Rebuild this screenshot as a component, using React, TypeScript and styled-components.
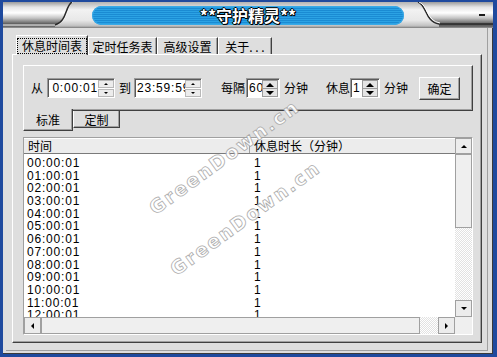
import React from 'react';
import styled, { createGlobalStyle } from 'styled-components';

const GlobalStyle = createGlobalStyle`
  html, body {
    margin: 0;
    padding: 0;
    background: #1f4a9e;
  }
  body {
    font-family: "Noto Sans CJK SC", "Liberation Sans", sans-serif;
    font-size: 12px;
    color: #000;
  }
`;

const Window = styled.div`
  position: relative;
  width: 497px;
  height: 357px;
  box-sizing: border-box;
  padding: 2px 4px 3px 3px;
  background: #1f4a9e;
  display: flex;
  flex-direction: column;
  overflow: hidden;
`;

const TitleBar = styled.div`
  position: relative;
  flex: none;
  height: 26px;
  display: grid;
  grid-template-columns: 1fr 312px 1fr;
  align-items: center;
`;

const TitleArt = styled.svg`
  position: absolute;
  left: 0;
  top: 0;
`;

const TitlePill = styled.div`
  position: relative;
  grid-column: 2;
  height: 19px;
  border-radius: 10px;
  background: repeating-linear-gradient(to bottom, #1a8bd3 0 1px, #2ba2e4 1px 2px);
  box-shadow: inset 0 0 0 1px #3aa9e6;
  color: #fff;
  font-size: 16px;
  font-weight: bold;
  line-height: 19px;
  text-align: center;
  text-shadow: 1px 0 #000, -1px 0 #000, 0 1px #000, 0 -1px #000, 1px 1px #000;
`;

const MinButton = styled.div`
  position: relative;
  grid-column: 3;
  justify-self: end;
  margin-right: 8px;
  width: 6px;
  height: 2px;
  background: #1c1c1c;
`;

const Client = styled.div`
  flex: 1;
  min-height: 0;
  display: flex;
  background: #dedede;
  border-right: 1px solid #3a3a3a;
  border-bottom: 1px solid #3a3a3a;
  padding: 0 4px 2px 3px;
`;

const Frame = styled.div`
  flex: 1;
  min-height: 0;
  display: flex;
  flex-direction: column;
  border-right: 1px solid #a0a0a0;
  border-bottom: 1px solid #a0a0a0;
  padding: 7px 5px 7px 6px;
`;

const TabStrip = styled.div`
  flex: none;
  display: flex;
  align-items: flex-end;
  height: 19px;
  padding-left: 4px;
`;

const Tab = styled.div<{ $active?: boolean; $w: number }>`
  position: relative;
  z-index: ${p => (p.$active ? 1 : 0)};
  box-sizing: border-box;
  width: ${p => p.$w}px;
  height: ${p => (p.$active ? 20 : 17)}px;
  margin-bottom: ${p => (p.$active ? -1 : 0)}px;
  display: flex;
  align-items: center;
  justify-content: center;
  background: #dedede;
  border-top: 1px solid #fff;
  border-left: 1px solid #fff;
  border-right: 1px solid #404040;
  box-shadow: inset -1px 0 #a0a0a0;
  white-space: nowrap;
`;

const FocusText = styled.span`
  border: 1px dotted #000;
  padding: 0 4px;
  line-height: 14px;
`;

const Page = styled.div`
  flex: 1;
  min-height: 0;
  display: flex;
  flex-direction: column;
  box-sizing: border-box;
  border-top: 1px solid #fff;
  border-left: 1px solid #fff;
  border-right: 1px solid #404040;
  border-bottom: 1px solid #404040;
  box-shadow: inset -1px -1px #a0a0a0;
  padding: 10px 8px 7px 10px;
`;

const Panel = styled.div`
  flex: none;
  height: 46px;
  box-sizing: border-box;
  display: flex;
  align-items: center;
  border-top: 1px solid #fff;
  border-left: 1px solid #fff;
  border-right: 1px solid #404040;
  border-bottom: 1px solid #404040;
  box-shadow: inset -1px -1px #a0a0a0;
`;

const Label = styled.span<{ $ml: number }>`
  margin-left: ${p => p.$ml}px;
  white-space: nowrap;
  line-height: 16px;
`;

const SpinBox = styled.div<{ $w: number; $ml: number }>`
  box-sizing: border-box;
  width: ${p => p.$w}px;
  height: 20px;
  margin-left: ${p => p.$ml}px;
  display: flex;
  background: #fff;
  border: 1px solid;
  border-color: #9a9a9a #fff #fff #9a9a9a;
  box-shadow: inset 1px 1px #5a5a5a;
`;

const SpinText = styled.div<{ $right?: boolean }>`
  flex: 1;
  overflow: hidden;
  display: flex;
  align-items: center;
  justify-content: ${p => (p.$right ? 'flex-end' : 'flex-start')};
  padding: 0 0 0 2px;
  font-family: "Liberation Sans", sans-serif;
  font-size: 12px;
  letter-spacing: 0.8px;
  white-space: nowrap;
`;

const SmallSpin = styled.div`
  flex: none;
  width: 16px;
  display: flex;
  flex-direction: column;
  gap: 1px;
  padding-top: 1px;
`;

const SpinHalf = styled.div`
  flex: 1;
  display: flex;
  align-items: center;
  justify-content: center;
  background: #ececec;
  border: 1px solid #b8b8b8;
`;

const BigSpin = styled.div`
  flex: none;
  width: 14px;
  margin: 1px 1px 0 0;
  display: flex;
  flex-direction: column;
  background: #e4e4e4;
  border: 1px solid #9a9a9a;
`;

const BigHalf = styled.div<{ $top?: boolean }>`
  flex: 1;
  display: flex;
  align-items: center;
  justify-content: center;
  border-bottom: ${p => (p.$top ? '1px solid #9a9a9a' : 'none')};
`;

const Tri = styled.span<{ $dir: 'up' | 'down' | 'left' | 'right'; $s: number }>`
  width: 0;
  height: 0;
  border-style: solid;
  border-color: transparent;
  ${p =>
    p.$dir === 'up'
      ? `border-width: 0 ${p.$s}px ${p.$s}px ${p.$s}px; border-bottom-color: #000;`
      : p.$dir === 'down'
      ? `border-width: ${p.$s}px ${p.$s}px 0 ${p.$s}px; border-top-color: #000;`
      : p.$dir === 'left'
      ? `border-width: ${p.$s}px ${p.$s}px ${p.$s}px 0; border-right-color: #000;`
      : `border-width: ${p.$s}px 0 ${p.$s}px ${p.$s}px; border-left-color: #000;`}
`;

const Button = styled.div`
  box-sizing: border-box;
  width: 41px;
  height: 23px;
  margin-left: 11px;
  display: flex;
  align-items: center;
  justify-content: center;
  background: #e2e2e2;
  border-top: 1px solid #fff;
  border-left: 1px solid #fff;
  border-right: 1px solid #404040;
  border-bottom: 1px solid #404040;
  box-shadow: inset -1px -1px #a0a0a0;
`;

const SubTabs = styled.div`
  flex: none;
  height: 20px;
  display: flex;
  align-items: flex-start;
  margin-bottom: 6px;
`;

const SubTab = styled.div<{ $active?: boolean; $w: number }>`
  position: relative;
  z-index: ${p => (p.$active ? 1 : 0)};
  box-sizing: border-box;
  width: ${p => p.$w}px;
  height: ${p => (p.$active ? 22 : 17)}px;
  margin-top: ${p => (p.$active ? -2 : 0)}px;
  display: flex;
  align-items: center;
  justify-content: center;
  background: #dedede;
  border-left: 1px solid #fff;
  border-right: 1px solid #404040;
  border-bottom: 1px solid #404040;
  box-shadow: inset -1px -1px #a0a0a0;
`;

const ListBox = styled.div`
  flex: 1;
  min-height: 0;
  display: grid;
  grid-template-columns: minmax(0, 1fr) 17px;
  grid-template-rows: minmax(0, 1fr) 17px;
  background: #fff;
  border: 1px solid;
  border-color: #a0a0a0 #fff #fff #a0a0a0;
  overflow: hidden;
`;

const ListContent = styled.div`
  min-height: 0;
  overflow: hidden;
  display: flex;
  flex-direction: column;
`;

const Header = styled.div`
  flex: none;
  display: flex;
  height: 16px;
  box-sizing: border-box;
  background: #ececec;
  border-top: 1px solid #fff;
  border-bottom: 1px solid #7a7a7a;
  margin-bottom: 3px;
`;

const HeaderCell = styled.div<{ $w?: number }>`
  box-sizing: border-box;
  ${p => (p.$w ? `width: ${p.$w}px;` : 'flex: 1;')}
  padding-left: 4px;
  line-height: 14px;
  border-right: ${p => (p.$w ? '1px solid #a0a0a0' : 'none')};
  white-space: nowrap;
`;

const Row = styled.div`
  display: flex;
  flex: none;
  height: 12.7px;
  font-family: "Liberation Sans", sans-serif;
  font-size: 12px;
  line-height: 12.7px;
  letter-spacing: 0.8px;
`;

const Cell = styled.div<{ $w?: number; $pl: number }>`
  ${p => (p.$w ? `width: ${p.$w}px;` : 'flex: 1;')}
  padding-left: ${p => p.$pl}px;
  box-sizing: border-box;
`;

const VScroll = styled.div`
  min-height: 0;
  display: flex;
  flex-direction: column;
`;

const HScroll = styled.div`
  display: flex;
`;

const ScrollBtn = styled.div<{ $w?: number; $h?: number }>`
  flex: none;
  box-sizing: border-box;
  width: ${p => (p.$w ? `${p.$w}px` : 'auto')};
  height: ${p => (p.$h ? `${p.$h}px` : 'auto')};
  display: flex;
  align-items: center;
  justify-content: center;
  background: #ececec;
  border: 1px solid #a0a0a0;
`;

const Thumb = styled.div<{ $w?: number; $h?: number }>`
  flex: none;
  box-sizing: border-box;
  width: ${p => (p.$w ? `${p.$w}px` : 'auto')};
  height: ${p => (p.$h ? `${p.$h}px` : 'auto')};
  background: #efefef;
  border: 1px solid #a0a0a0;
`;

const Track = styled.div`
  flex: 1;
  background: repeating-conic-gradient(#fff 0 25%, #e2e2e2 0 50%) 0 0 / 2px 2px;
`;

const Corner = styled.div`
  background: #efefef;
`;

const Watermark = styled.div<{ $x: number; $y: number }>`
  position: absolute;
  left: ${p => p.$x}px;
  top: ${p => p.$y}px;
  transform: translate(-50%, -50%) rotate(-36deg);
  font-family: "DejaVu Sans", sans-serif;
  font-weight: bold;
  font-size: 19px;
  letter-spacing: 2px;
  color: #fff;
  -webkit-text-stroke: 0.8px #a4a4a4;
  opacity: 0.9;
  white-space: nowrap;
  pointer-events: none;
`;

const rows = Array.from({ length: 13 }, (_, i) => `${String(i).padStart(2, '0')}:00:01`);

const TimeSpin: React.FC<{ value: string; w: number; ml: number; right?: boolean }> = ({ value, w, ml, right }) => (
  <SpinBox $w={w} $ml={ml}>
    <SpinText $right={right}>{value}</SpinText>
    <SmallSpin>
      <SpinHalf>
        <Tri $dir="up" $s={2} />
      </SpinHalf>
      <SpinHalf>
        <Tri $dir="down" $s={2} />
      </SpinHalf>
    </SmallSpin>
  </SpinBox>
);

const NumSpin: React.FC<{ value: string; w: number; ml: number }> = ({ value, w, ml }) => (
  <SpinBox $w={w} $ml={ml}>
    <SpinText>{value}</SpinText>
    <BigSpin>
      <BigHalf $top>
        <Tri $dir="up" $s={4} />
      </BigHalf>
      <BigHalf>
        <Tri $dir="down" $s={4} />
      </BigHalf>
    </BigSpin>
  </SpinBox>
);

const App: React.FC = () => {
  return (
    <>
      <GlobalStyle />
      <Window>
        <TitleBar>
          <TitleArt width="490" height="26" viewBox="0 0 490 26">
            <defs>
              <linearGradient id="side" x1="0" y1="0" x2="0" y2="1">
                <stop offset="0" stopColor="#9c9c9c" />
                <stop offset="0.2" stopColor="#e6e6e6" />
                <stop offset="0.42" stopColor="#ffffff" />
                <stop offset="0.62" stopColor="#c4c4c4" />
                <stop offset="0.86" stopColor="#555555" />
                <stop offset="1" stopColor="#7a7a7a" />
              </linearGradient>
              <linearGradient id="mid" x1="0" y1="0" x2="0" y2="1">
                <stop offset="0" stopColor="#b4b4b4" />
                <stop offset="0.3" stopColor="#f2f2f2" />
                <stop offset="0.7" stopColor="#e8e8e8" />
                <stop offset="0.9" stopColor="#c4c4c4" />
                <stop offset="1" stopColor="#8c8c8c" />
              </linearGradient>
            </defs>
            <rect x="0" y="0" width="490" height="26" fill="url(#side)" />
            <path d="M69 0 L415 0 C424 3 422 20 436 22 L436 26 L52 26 L52 23 C64 20 62 4 69 0 Z" fill="url(#mid)" />
            <path d="M70 0 C63 4 65 20 53 23 L0 23" fill="none" stroke="#ffffff" strokeWidth="1" />
            <path d="M69 0 C62 4 64 20 52 23" fill="none" stroke="#2a2a2a" strokeWidth="1.5" />
            <path d="M415 0 C424 3 422 20 436 22 L490 22" fill="none" stroke="#2a2a2a" strokeWidth="1.5" />
            <path d="M416 0 C425 3 423 19 437 21" fill="none" stroke="#ffffff" strokeWidth="1" />
            <rect x="0" y="25" width="490" height="1" fill="#8a8a8a" />
          </TitleArt>
          <TitlePill>**守护精灵**</TitlePill>
          <MinButton />
        </TitleBar>
        <Client>
          <Frame>
            <TabStrip>
              <Tab $active $w={72}>
                <FocusText>休息时间表</FocusText>
              </Tab>
              <Tab $w={69}>定时任务表</Tab>
              <Tab $w={61}>高级设置</Tab>
              <Tab $w={54}>关于. . .</Tab>
            </TabStrip>
            <Page>
              <Panel>
                <Label $ml={7}>从</Label>
                <TimeSpin value="0:00:01" w={68} ml={4} right />
                <Label $ml={4}>到</Label>
                <TimeSpin value="23:59:59" w={68} ml={3} />
                <Label $ml={19}>每隔</Label>
                <NumSpin value="60" w={34} ml={1} />
                <Label $ml={4}>分钟</Label>
                <Label $ml={18}>休息</Label>
                <NumSpin value="1" w={30} ml={0} />
                <Label $ml={4}>分钟</Label>
                <Button>确定</Button>
              </Panel>
              <SubTabs>
                <SubTab $active $w={50}>标准</SubTab>
                <SubTab $w={47}>定制</SubTab>
              </SubTabs>
              <ListBox>
                <ListContent>
                  <Header>
                    <HeaderCell $w={226}>时间</HeaderCell>
                    <HeaderCell>休息时长（分钟）</HeaderCell>
                  </Header>
                  {rows.map(r => (
                    <Row key={r}>
                      <Cell $w={226} $pl={3}>{r}</Cell>
                      <Cell $pl={4}>1</Cell>
                    </Row>
                  ))}
                </ListContent>
                <VScroll>
                  <ScrollBtn $h={16}>
                    <Tri $dir="up" $s={3} />
                  </ScrollBtn>
                  <Thumb $h={74} />
                  <Track />
                  <ScrollBtn $h={17}>
                    <Tri $dir="down" $s={3} />
                  </ScrollBtn>
                </VScroll>
                <HScroll>
                  <ScrollBtn $w={17}>
                    <Tri $dir="left" $s={3} />
                  </ScrollBtn>
                  <Thumb $w={379} />
                  <Track />
                  <ScrollBtn $w={17}>
                    <Tri $dir="right" $s={3} />
                  </ScrollBtn>
                </HScroll>
                <Corner />
              </ListBox>
            </Page>
          </Frame>
        </Client>
        <Watermark $x={224} $y={157}>GreenDown.cn</Watermark>
        <Watermark $x={245} $y={218}>GreenDown.cn</Watermark>
      </Window>
    </>
  );
};

export default App;
